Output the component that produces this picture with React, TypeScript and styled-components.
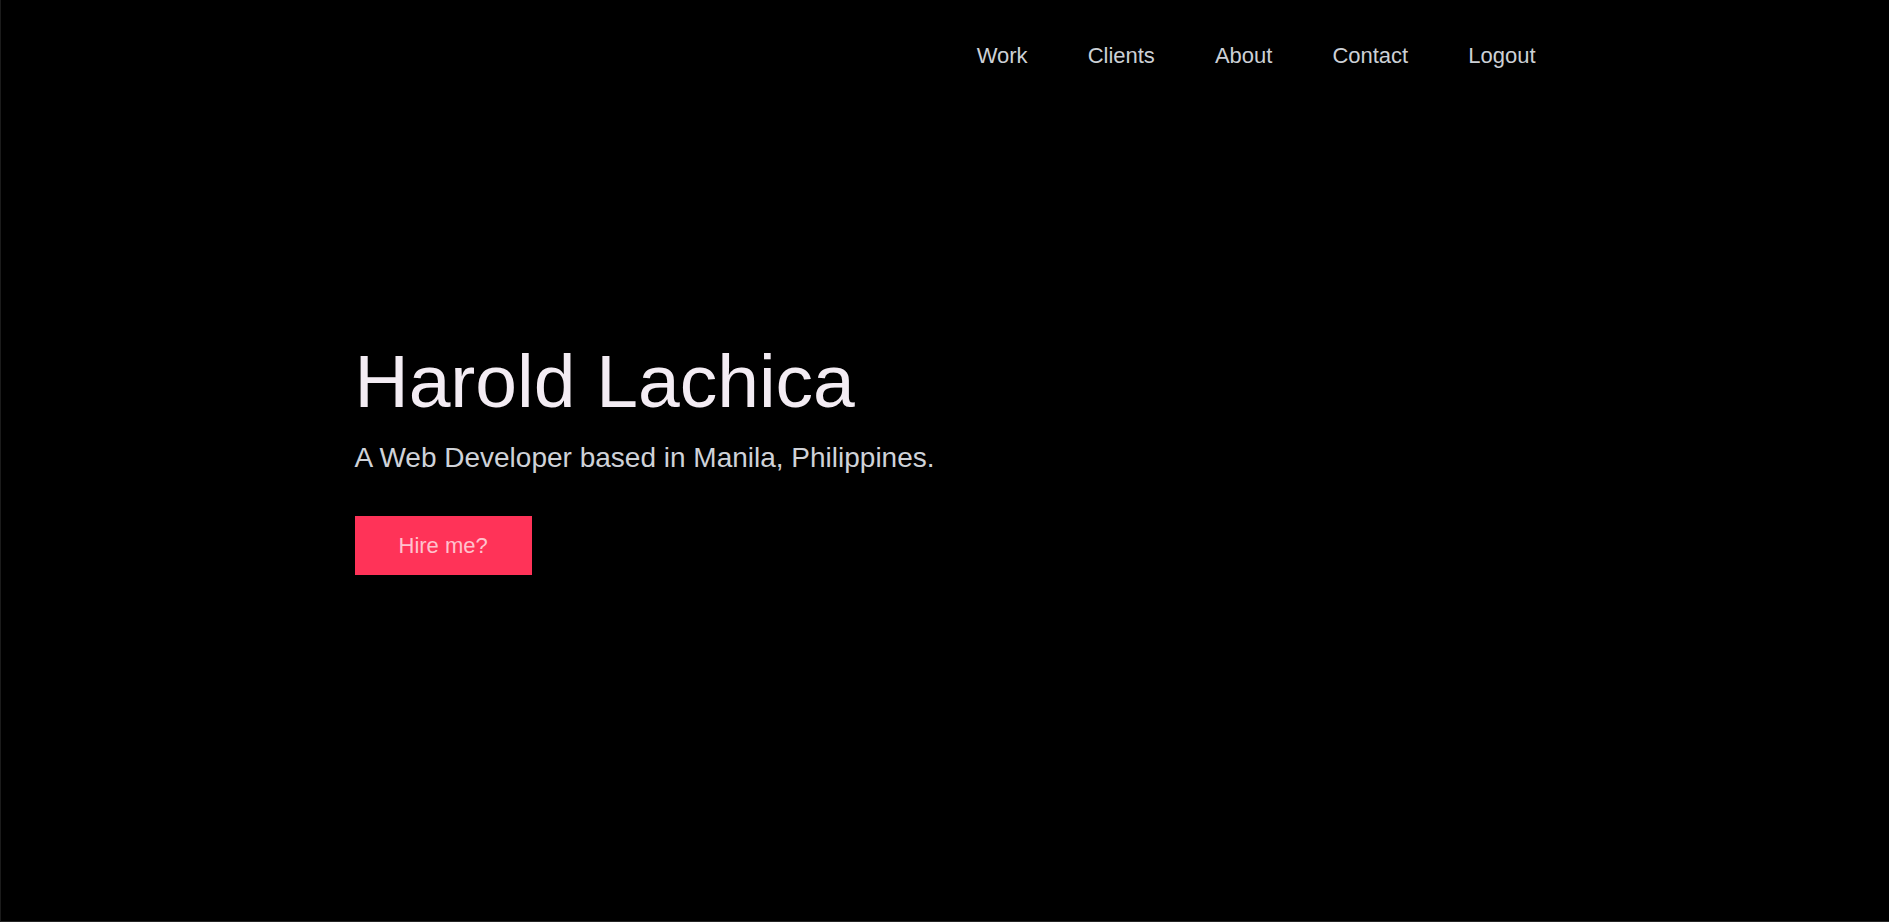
import styled, { createGlobalStyle } from 'styled-components';

const GlobalStyle = createGlobalStyle`
  *, *::before, *::after {
    box-sizing: border-box;
  }

  body {
    margin: 0;
    background: #000;
    font-family: 'Liberation Sans', Arial, Helvetica, sans-serif;
  }
`;

const navLinks = ['Work', 'Clients', 'About', 'Contact', 'Logout'];

const App = () => {
  return (
    <>
      <GlobalStyle />
      <Page>
        <Header>
          <Nav>
            {navLinks.map((link) => (
              <NavItem key={link}>
                <NavLink href="#">{link}</NavLink>
              </NavItem>
            ))}
          </Nav>
        </Header>
        <Hero>
          <Title>Harold Lachica</Title>
          <Subtitle>A Web Developer based in Manila, Philippines.</Subtitle>
          <HireButton type="button">Hire me?</HireButton>
        </Hero>
      </Page>
    </>
  );
};

export default App;

const Page = styled.div`
  min-height: 100vh;
  background: #000;
  border-left: 1px solid #1b1b1b;
  border-bottom: 1px solid #262626;
`;

const Container = styled.div`
  max-width: 1181px;
  margin: 0 auto;
`;

const Header = styled(Container)`
  padding-top: 43px;
`;

const Nav = styled.ul`
  display: flex;
  justify-content: flex-end;
  gap: 60px;
  list-style: none;
  margin: 0;
  padding: 0;
`;

const NavItem = styled.li`
  line-height: 26px;
`;

const NavLink = styled.a`
  font-size: 22px;
  color: #ccd0d6;
  text-decoration: none;
`;

const Hero = styled(Container)`
  padding-top: 267px;
  display: flex;
  flex-direction: column;
  align-items: flex-start;
`;

const Title = styled.h1`
  margin: 0;
  font-size: 75px;
  font-weight: 400;
  line-height: 1.15;
  color: #f3ecf3;
`;

const Subtitle = styled.p`
  margin: 18px 0 0;
  font-size: 28px;
  line-height: 1.15;
  color: #cfd2d8;
`;

const HireButton = styled.button`
  margin-top: 42px;
  height: 59px;
  padding: 0 44px;
  border: none;
  border-radius: 0;
  background: #ff3358;
  color: #ffc2cd;
  font-family: inherit;
  font-size: 22px;
  cursor: pointer;
`;
